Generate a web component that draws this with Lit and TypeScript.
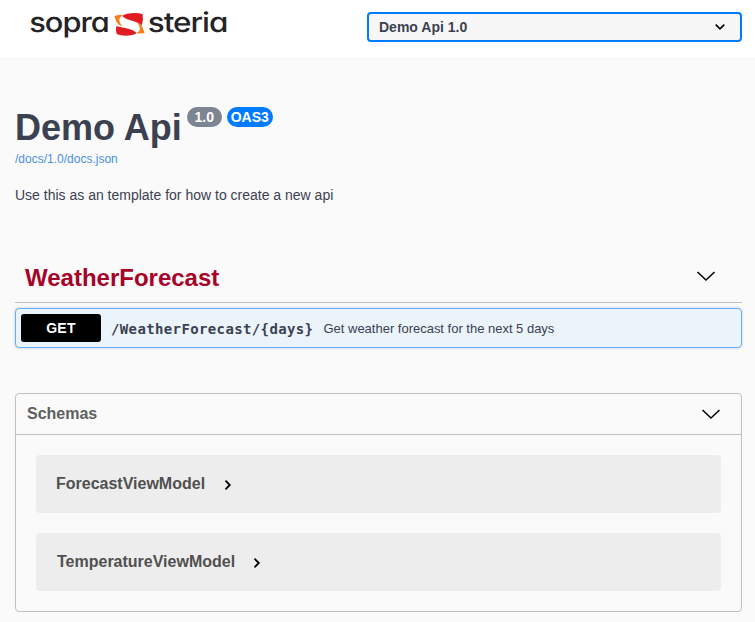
import { LitElement, html, css } from "lit";
import { customElement, property } from "lit/decorators.js";

@customElement("brand-logo")
class BrandLogo extends LitElement {
  static styles = css`
    :host { display: block; width: 200px; height: 46px; }
    svg { display: block; overflow: visible; }
    .word { font: 500 27.5px Inter, Lato, sans-serif; font-feature-settings: "cv11"; letter-spacing: -.9px; fill: #252326; text-rendering: geometricPrecision; }
    .red { fill: #e01b24; }
    .orange { fill: #f5821f; }
  `;
  render() {
    return html`<svg width="200" height="46" viewBox="29 0 200 46" role="img" aria-label="sopra steria">
      <text class="word" x="29.3" y="32.3" textLength="79.5" lengthAdjust="spacingAndGlyphs">sopra</text>
      <g transform="translate(20 0) scale(.33333)">
        <path class="orange" d="M283 49Q292 43 308 45Q298 52 298 61Q298 71 307 79Q295 76 289 65Z"/>
        <path class="red" d="M306 48Q317 39 345 39Q358 39 368 43Q371 62 365 77Q358 68 339 63Q317 58 306 48Z"/>
        <path class="red" d="M289 78Q296 80 316 84Q340 89 350 99Q340 107 317 107Q301 107 290 102Q286 91 289 78Z"/>
        <path class="orange" d="M350 67Q363 72 368 84L374 98Q364 102 350 100Q359 94 360 86Q360 76 350 67Z"/>
      </g>
      <text class="word" x="147.8" y="32.3" textLength="79.5" lengthAdjust="spacingAndGlyphs">steria</text>
    </svg>`;
  }
}

@customElement("chevron-icon")
class ChevronIcon extends LitElement {
  @property() kind = "large";
  static styles = css`
    :host { display: block; flex: none; }
    svg { display: block; fill: none; stroke: #000; }
  `;
  render() {
    if (this.kind === "large")
      return html`<svg width="20" height="12" viewBox="0 0 20 12"><path d="M1.5 2L10 10L18.5 2" stroke-width="1.5"/></svg>`;
    if (this.kind === "right")
      return html`<svg width="8" height="12" viewBox="0 0 8 12"><path d="M1.5 1.7L5.8 6L1.5 10.3" stroke-width="1.8"/></svg>`;
    return html`<svg width="12" height="8" viewBox="0 0 12 8"><path d="M1.7 1.7L6 5.8L10.3 1.7" stroke-width="1.7"/></svg>`;
  }
}

@customElement("app-root")
class AppRoot extends LitElement {
  static styles = css`
    :host {
      display: block; box-sizing: border-box; height: 622px; overflow: hidden;
      background: #fafafa; color: #3b4151; font-family: "Liberation Sans", Arial, sans-serif;
    }
    * { box-sizing: border-box; }
    .topbar { display: flex; justify-content: space-between; height: 57px; padding: 0 13px 0 29px; background: #fff; }
    .select {
      display: flex; align-items: center; justify-content: space-between; width: 375px; height: 30px; margin-top: 12px;
      padding: 0 14px 0 10px; border: 2px solid #007bff; border-radius: 4px; background: #f7f7f7;
      font-size: 14px; font-weight: 700;
    }
    .content { padding: 50px 13px 0 15px; }
    .title { display: flex; height: 43px; margin: 0; font-size: 36px; line-height: 41px; }
    .badge {
      height: 20px; margin-left: 5px; border-radius: 20px; background: #7d8492; color: #fff;
      font-size: 14px; line-height: 20px; text-align: center; width: 35px;
    }
    .badge.oas { width: 46px; background: #007bff; }
    .link { display: block; height: 18px; font-size: 12px; line-height: 18px; color: #4990e2; text-decoration: none; }
    .desc { margin: 19px 0 0; font-size: 14px; line-height: 16px; }
    .tag {
      display: flex; align-items: center; justify-content: space-between; height: 50px; margin: 50px 0 0;
      padding: 0 26px 0 10px; border-bottom: 1px solid #c0c0c0; color: #a50428; font-size: 24px;
    }
    .tag chevron-icon { padding-bottom: 4px; }
    .operation {
      display: flex; align-items: center; height: 40px; margin-top: 5px; padding: 0 5px;
      border: 1px solid #61affe; border-radius: 4px; background: #ebf3fb; box-shadow: 0 0 3px rgba(0,0,0,.19);
    }
    .method { width: 80px; height: 28px; border-radius: 3px; background: #000; color: #fff; font-size: 14px; font-weight: 700; line-height: 28px; letter-spacing: .3px; text-align: center; }
    .path { width: 202px; margin-left: 10px; font: 600 14px/18px "DejaVu Sans Mono", monospace; letter-spacing: .37px; white-space: nowrap; padding-top: 2px; }
    .summary { margin-left: 10.5px; font-size: 13px; letter-spacing: -.01px; }
    .schemas { height: 219px; margin-top: 45px; border: 1px solid #bfc0c2; border-radius: 4px; }
    .schemas-title {
      display: flex; align-items: center; justify-content: space-between; height: 41px; margin: 0;
      padding: 0 20px 0 11px; border-bottom: 1px solid #bfc0c2; color: #606060; font-size: 16px;
    }
    .models { display: flex; flex-direction: column; gap: 20px; padding: 20px; }
    .model { display: flex; align-items: center; gap: 19px; height: 58px; padding: 0 20px; border-radius: 4px; background: #ededed; color: #505050; font-size: 16px; font-weight: 700; }
    .model chevron-icon { padding-top: 1px; }
    .model:last-child { padding-left: 21px; gap: 18px; }
  `;
  private models = ["ForecastViewModel", "TemperatureViewModel"];
  render() {
    return html`
      <header class="topbar">
        <brand-logo></brand-logo>
        <div class="select"><span>Demo Api 1.0</span><chevron-icon kind="down"></chevron-icon></div>
      </header>
      <main class="content">
        <h1 class="title">Demo Api<span class="badge">1.0</span><span class="badge oas">OAS3</span></h1>
        <a class="link" href="#">/docs/1.0/docs.json</a>
        <p class="desc">Use this as an template for how to create a new api</p>
        <h2 class="tag"><span>WeatherForecast</span><chevron-icon></chevron-icon></h2>
        <div class="operation">
          <span class="method">GET</span><span class="path">/WeatherForecast/{days}</span>
          <span class="summary">Get weather forecast for the next 5 days</span>
        </div>
        <section class="schemas">
          <h3 class="schemas-title"><span>Schemas</span><chevron-icon></chevron-icon></h3>
          <div class="models">
            ${this.models.map((m) => html`<div class="model"><span>${m}</span><chevron-icon kind="right"></chevron-icon></div>`)}
          </div>
        </section>
      </main>`;
  }
}
